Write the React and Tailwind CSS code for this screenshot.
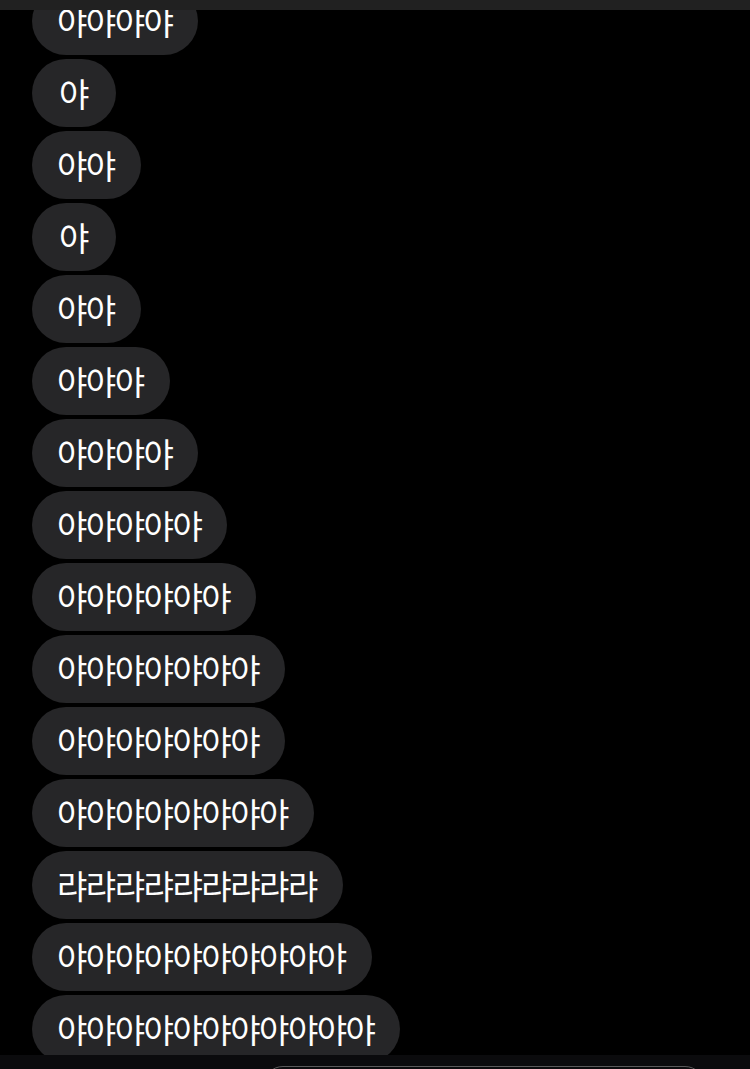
import React from "react";

const rows = [
  "야야야야",
  "야",
  "야야",
  "야",
  "야야",
  "야야야",
  "야야야야",
  "야야야야야",
  "야야야야야야",
  "야야야야야야야",
  "야야야야야야야",
  "야야야야야야야야",
  "랴랴랴랴랴랴랴랴랴",
  "야야야야야야야야야야",
  "야야야야야야야야야야야",
];

export default function App() {
  return (
    <div
      className="relative w-[750px] h-[1069px] overflow-hidden bg-black"
      style={{ fontFamily: '"Noto Sans CJK KR", "Noto Sans", sans-serif' }}
    >
      <div className="flex flex-col items-start gap-[4px] pl-[32px] -mt-[13px]">
        {rows.map((t, i) => (
          <div
            key={i}
            className="h-[68px] min-w-[84px] flex items-center justify-center rounded-full bg-[#262628] pl-[25px] pr-[26px] text-white text-[33px] tracking-[-1.5px] leading-none"
          >
            {t}
          </div>
        ))}
      </div>

      <div className="absolute top-0 left-0 w-full h-[10px] bg-[#212121]" />

      <div className="absolute left-0 bottom-0 w-full h-[14px] bg-[#0b0b0d]">
        <div className="absolute left-[263px] top-[11px] w-[442px] h-[40px] rounded-[20px] border-[1.5px] border-[#5a5a5a]" />
      </div>
    </div>
  );
}
